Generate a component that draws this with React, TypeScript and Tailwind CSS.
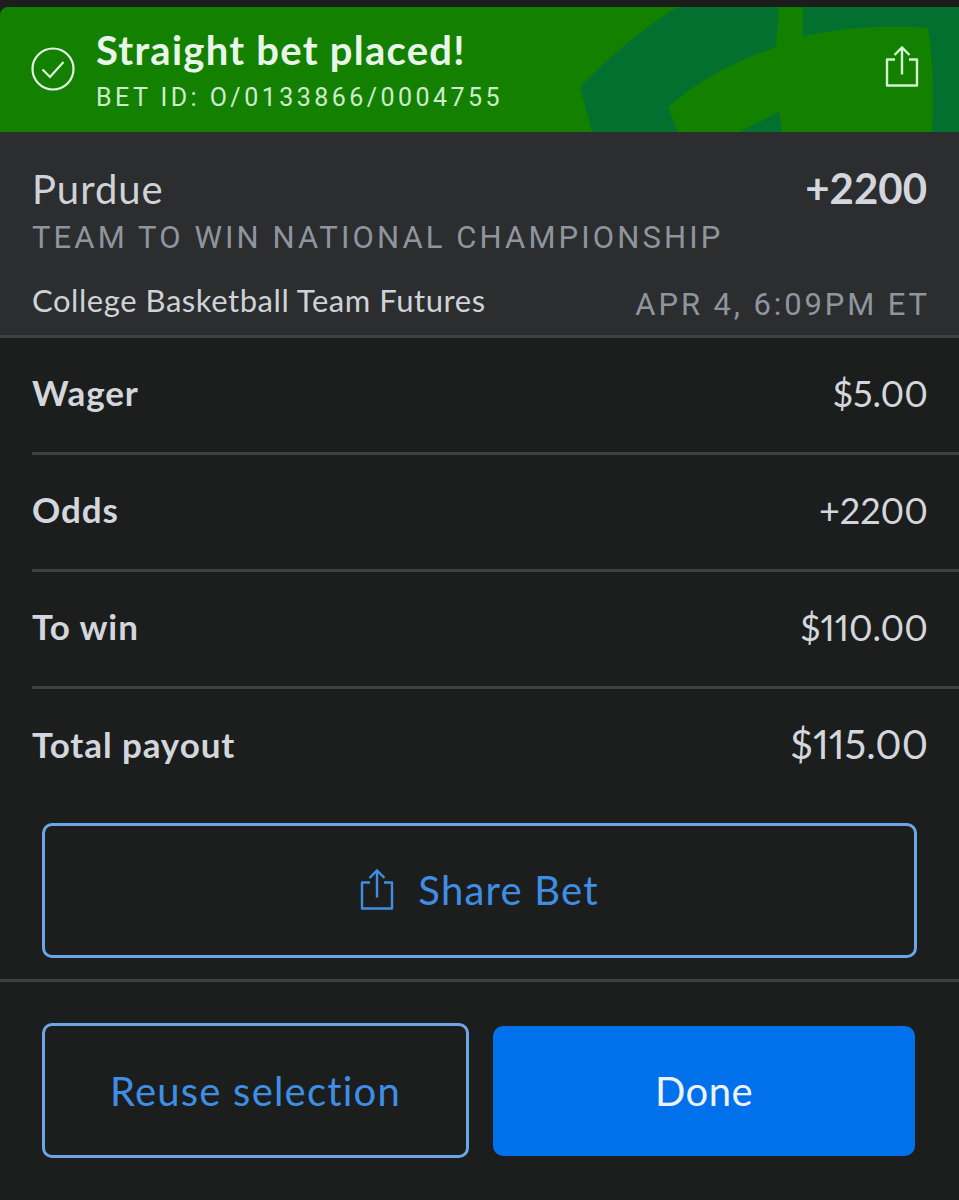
import type { ReactNode } from 'react';

const sans = 'font-["Lato","Open_Sans",sans-serif]';
const caps = 'font-["Roboto",sans-serif]';

function ShareIcon({ className }: { className: string }) {
  return (
    <svg viewBox="0 0 34 42" fill="none" stroke="currentColor" strokeWidth="2.4" className={className}>
      <path d="M10 14H2v26h30V14h-8" strokeLinejoin="round" />
      <path d="M17 29V2M9.5 9.5 17 2l7.5 7.5" />
    </svg>
  );
}

function BannerArt() {
  return (
    <svg viewBox="0 0 959 125" className="absolute inset-0 h-full w-full" fill="#04702f">
      <path d="M677 0 Q625 33 580 80 L592 125 H678 L668 100 Q710 63 776 40 L779 0Z" />
      <path d="M803 0 H959 V125 H932 Q935 65 928 21 Q870 16 803 29Z" />
      <path d="M740 125 Q760 114 779 105 L782 125Z" />
    </svg>
  );
}

function Row({ label, value, last, big }: { label: string; value: string; last?: boolean; big?: boolean }) {
  return (
    <div className={`ml-8 flex h-[117px] items-center justify-between pr-[31px] ${last ? 'pb-[7px]' : 'border-b-[3px] border-[#3f4142] pb-[5px]'}`}>
      <span className="text-[35px] font-bold tracking-[0.9px] text-[#d3d6dc]">{label}</span>
      <span className={`${big ? 'text-[40px]' : 'text-[36px]'} proportional-nums text-[#d3d6dc]`}>{value}</span>
    </div>
  );
}

function OutlineButton({ children, className }: { children: ReactNode; className: string }) {
  return (
    <button className={`flex h-[135px] items-center justify-center rounded-[10px] border-[3px] border-[#6da6e6] text-[40px] tracking-[1.2px] text-[#3f8ee6] ${className}`}>
      {children}
    </button>
  );
}

export default function App() {
  return (
    <div className={`${sans} h-[1200px] w-[959px] overflow-hidden bg-[#1c1e1e] pt-[7px]`}>
      <div className="relative flex h-[125px] items-center overflow-hidden rounded-tl-lg bg-[#148000] pl-[31px] pr-[40px]">
        <BannerArt />
        <svg viewBox="0 0 44 44" fill="none" stroke="#e4f5e4" strokeWidth="2.2" className="relative -top-px h-11 w-11">
          <circle cx="22" cy="22" r="20.5" />
          <path d="M11.5 22.5 19 30 32.5 15" />
        </svg>
        <div className="relative ml-[21px] flex-1">
          <div className="text-[40px] font-bold leading-[46px] tracking-[1.25px] text-[#e8f6ea]">Straight bet placed!</div>
          <div className={`${caps} mt-[10px] text-[25px] leading-[30px] tracking-[3.45px] text-[#cdeccf]`}>BET ID: O/0133866/0004755</div>
        </div>
        <ShareIcon className="relative -top-[3px] h-[43px] w-[34px] text-[#d3f5d3]" />
      </div>

      <div className="h-[206px] border-b-[3px] border-[#3f4142] bg-[#2b2d2f] px-8 pt-[33px]">
        <div className="flex items-start justify-between">
          <span className="text-[40px] leading-[48px] tracking-[1px] text-[#cfd2d7]">Purdue</span>
          <span className="text-[42px] font-bold leading-[46px] text-[#d3d6dc]">+2200</span>
        </div>
        <div className={`${caps} mt-[5px] text-[31px] leading-[40px] tracking-[3.1px] text-[#8f959e]`}>TEAM TO WIN NATIONAL CHAMPIONSHIP</div>
        <div className="mt-[22px] flex items-center justify-between">
          <span className="text-[31px] leading-[40px] tracking-[0.55px] text-[#cfd2d7]">College Basketball Team Futures</span>
          <span className={`${caps} relative top-[5px] -mr-[3px] text-[31px] leading-[40px] tracking-[2.9px] text-[#8f959e]`}>APR 4, 6:09PM ET</span>
        </div>
      </div>

      <Row label="Wager" value="$5.00" />
      <Row label="Odds" value="+2200" />
      <Row label="To win" value="$110.00" />
      <Row label="Total payout" value="$115.00" last big />

      <div className="border-b-[3px] border-[#3f4142] px-[42px] pb-[21px] pt-[17px]">
        <OutlineButton className="w-full gap-[24px] pb-[2px]">
          <ShareIcon className="h-[43px] w-[34px]" />
          <span>Share Bet</span>
        </OutlineButton>
      </div>

      <div className="flex gap-[24px] px-[42px] pt-[41px]">
        <OutlineButton className="w-[427px]">Reuse selection</OutlineButton>
        <button className="mr-[2px] mt-[3px] h-[130px] flex-1 rounded-[10px] bg-[#0070eb] text-[40px] tracking-[0.4px] text-[#eef3fb]">Done</button>
      </div>
    </div>
  );
}
